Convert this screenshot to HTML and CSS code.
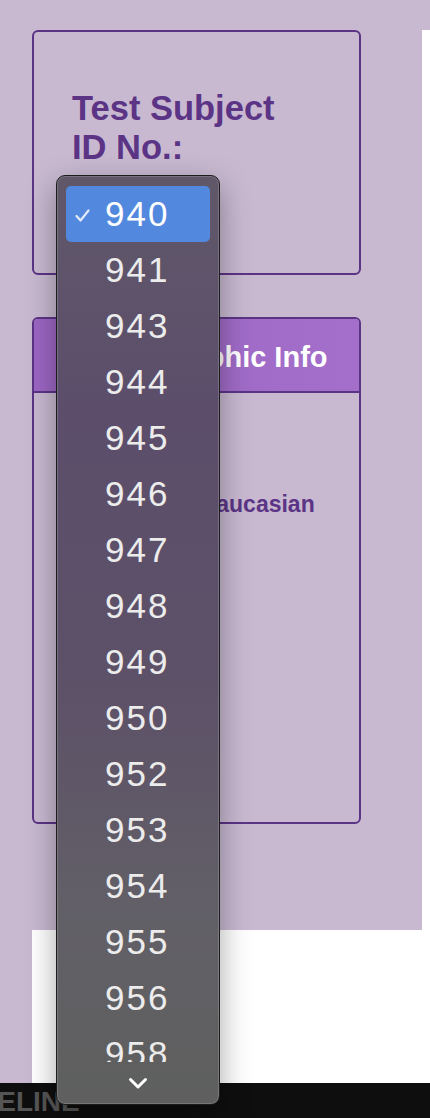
FILE: index.html
```html
<!DOCTYPE html>
<html lang="en">
<head>
    <meta charset="UTF-8">
    <meta name="viewport" content="width=device-width, initial-scale=1.0">
    <title>Test Subject</title>
    <link rel="stylesheet" href="styles.css">
</head>
<body>
    <!-- Main white frame with the lavender panel -->
    <div class="frame">
        <div class="panel">
            <!-- Subject ID card -->
            <section class="card card-id">
                <h2 class="card-id-title">Test Subject<br>ID No.:</h2>
            </section>

            <!-- Demographic card -->
            <section class="card card-demo">
                <div class="card-head">Demographic Info</div>
                <div class="card-body">
                    <p class="field"><span>Race:</span><span>Caucasian</span></p>
                </div>
            </section>
        </div>
    </div>

    <!-- Bottom timeline bar -->
    <footer class="timeline-bar">TIMELINE</footer>

    <!-- Open select popup -->
    <div class="menu">
        <ul class="menu-list">
            <li class="menu-item selected">
                <span class="check">
                    <svg width="15" height="13" viewBox="0 0 15 13"><path d="M1.5 7 L5.5 11.5 L13.5 1.5" fill="none" stroke="#e3e9f7" stroke-width="2.2" stroke-linecap="round" stroke-linejoin="round"/></svg>
                </span>940
            </li>
            <li class="menu-item"><span class="check"></span>941</li>
            <li class="menu-item"><span class="check"></span>943</li>
            <li class="menu-item"><span class="check"></span>944</li>
            <li class="menu-item"><span class="check"></span>945</li>
            <li class="menu-item"><span class="check"></span>946</li>
            <li class="menu-item"><span class="check"></span>947</li>
            <li class="menu-item"><span class="check"></span>948</li>
            <li class="menu-item"><span class="check"></span>949</li>
            <li class="menu-item"><span class="check"></span>950</li>
            <li class="menu-item"><span class="check"></span>952</li>
            <li class="menu-item"><span class="check"></span>953</li>
            <li class="menu-item"><span class="check"></span>954</li>
            <li class="menu-item"><span class="check"></span>955</li>
            <li class="menu-item"><span class="check"></span>956</li>
            <li class="menu-item"><span class="check"></span>958</li>
        </ul>
        <div class="menu-more">
            <svg width="20" height="13" viewBox="0 0 20 13"><path d="M2.5 2.5 L10 10 L17.5 2.5" fill="none" stroke="#ffffff" stroke-width="3" stroke-linecap="round" stroke-linejoin="round"/></svg>
        </div>
    </div>
</body>
</html>
```

FILE: styles.css
```css
/* Page base */
body {
    margin: 0;
    font-family: "Liberation Sans", Arial, sans-serif;
    background-color: #c8b9d1;
    overflow: hidden;
}

/* White frame behind the panel */
.frame {
    margin: 30px 0 0 32px;
    height: 1053px;
    background-color: #fff;
}

/* Lavender panel */
.panel {
    width: 390px;
    height: 900px;
    background-color: #c8b9d1;
}

/* Cards */
.card {
    box-sizing: border-box;
    width: 329px;
    border: 2px solid #5b3486;
    border-radius: 6px;
}

.card-id {
    height: 245px;
    padding: 57px 0 0 38px;
}

.card-id-title {
    margin: 0;
    font-size: 34.5px;
    line-height: 38.5px;
    font-weight: bold;
    color: #5b3486;
}

.card-demo {
    height: 507px;
    margin-top: 42px;
}

.card-head {
    height: 68px;
    padding: 4px 0 0 47px;
    line-height: 68px;
    font-size: 29px;
    font-weight: bold;
    color: #fff;
    background: linear-gradient(90deg, #9c66c4, #a36fca);
    border-bottom: 2px solid #5b3486;
    border-radius: 4px 4px 0 0;
}

.card-body {
    padding: 97px 0 0 46px;
}

.field {
    display: flex;
    gap: 57px;
    margin: 0;
    font-size: 23px;
    line-height: 28px;
    font-weight: bold;
    color: #5b3486;
}

/* Timeline bar */
.timeline-bar {
    height: 35px;
    padding-top: 2px;
    box-sizing: border-box;
    line-height: 33px;
    margin-left: -51px;
    font-size: 28px;
    font-weight: bold;
    color: #555;
    background-color: #0e0e0e;
    box-shadow: 51px 0 0 #0e0e0e;
}

/* Select popup (floats above the page) */
.menu {
    position: absolute;
    left: 56px;
    top: 175px;
    width: 164px;
    height: 930px;
    box-sizing: border-box;
    padding: 10px 9px 0;
    border: 1px solid #1c1c1c;
    border-radius: 9px;
    background: linear-gradient(180deg, #605869 0%, #5c4e6b 25%, #5d5168 55%, #626067 80%, #5e5f5e 100%);
    box-shadow: inset 0 0 0 1px rgba(255, 255, 255, 0.16), 0 10px 30px rgba(0, 0, 0, 0.35);
    display: flex;
    flex-direction: column;
}

.menu-list {
    list-style: none;
    margin: 0;
    padding: 0;
    height: 876px;
    overflow: hidden;
}

.menu-item {
    display: flex;
    align-items: center;
    height: 56px;
    padding-left: 9px;
    font-size: 35px;
    letter-spacing: 2px;
    line-height: 56px;
    color: #ececec;
    border-radius: 5px;
}

.menu-item.selected {
    background-color: #5289de;
    color: #fff;
}

.check {
    display: flex;
    flex: 0 0 15px;
    width: 15px;
    margin-right: 15px;
    margin-top: 3px;
}

.menu-more {
    flex: 1;
    display: flex;
    align-items: center;
    justify-content: center;
}
```
